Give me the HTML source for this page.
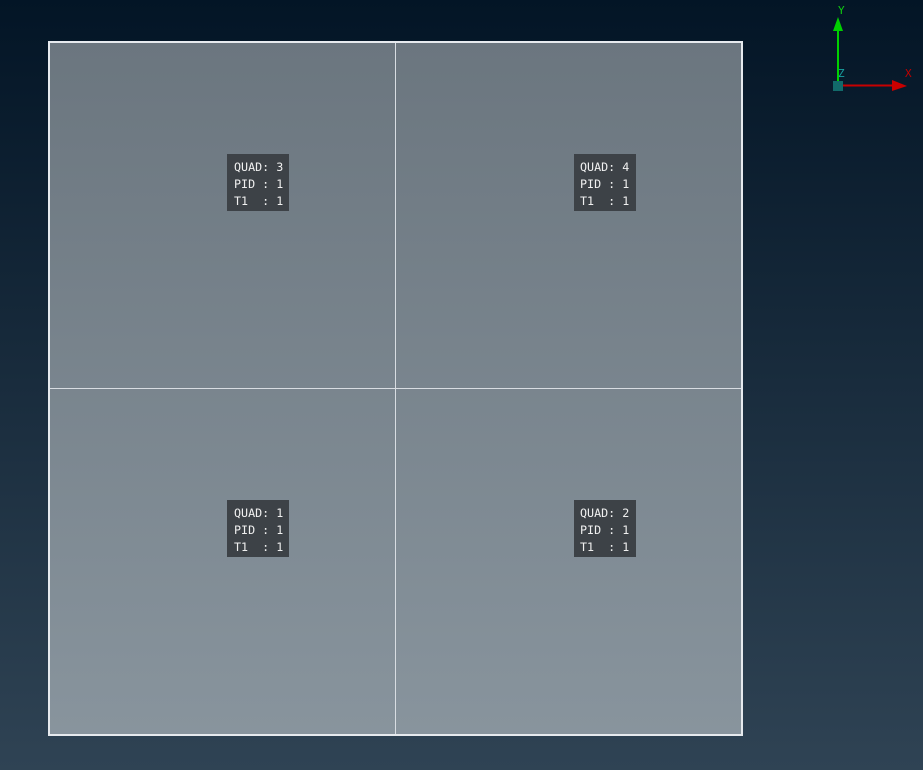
<!DOCTYPE html>
<html><head><style>
html,body{margin:0;padding:0}
body{width:923px;height:770px;background:linear-gradient(#031526,#2f4354);position:relative;overflow:hidden;font-family:"DejaVu Sans Mono","Liberation Mono",monospace}
.quad{position:absolute;left:48px;top:41px;width:691px;height:691px;border:2px solid #e6eaee;background:linear-gradient(#6b767f,#88949d)}
.v{position:absolute;left:345px;top:0;width:1px;height:691px;background:#d8dde2}
.h{position:absolute;top:345px;left:0;height:1px;width:691px;background:#d8dde2}
.lab{position:absolute;background:#3d4247;color:#f0f0f0;font-size:11.7px;line-height:17px;padding:5px 0 0 7px;white-space:pre;width:55px;height:52px;box-sizing:content-box}
.r{padding-left:6px;width:56px}
</style></head><body>
<div class="quad"><div class="v"></div><div class="h"></div></div>
<div class="lab" style="left:227px;top:154px">QUAD: 3
PID : 1
T1  : 1</div>
<div class="lab r" style="left:574px;top:154px">QUAD: 4
PID : 1
T1  : 1</div>
<div class="lab" style="left:227px;top:500px">QUAD: 1
PID : 1
T1  : 1</div>
<div class="lab r" style="left:574px;top:500px">QUAD: 2
PID : 1
T1  : 1</div>
<svg style="position:absolute;left:820px;top:0" width="103" height="100">
<line x1="18" y1="85.5" x2="80" y2="85.5" stroke="#c80000" stroke-width="2"/>
<polygon points="72,80 87,86 72,91" fill="#c80000"/>
<line x1="18" y1="85" x2="18" y2="28" stroke="#00d000" stroke-width="2"/>
<polygon points="13,31 18,17 23,31" fill="#00d000"/>
<rect x="13" y="81" width="10" height="10" fill="#126a6a"/>
<text x="18" y="14" fill="#10d010" font-size="11" font-family="DejaVu Sans Mono,monospace">Y</text>
<text x="18" y="77" fill="#18a0a0" font-size="11" font-family="DejaVu Sans Mono,monospace">Z</text>
<text x="85" y="77" fill="#c00000" font-size="11" font-family="DejaVu Sans Mono,monospace">X</text>
</svg>
</body></html>
